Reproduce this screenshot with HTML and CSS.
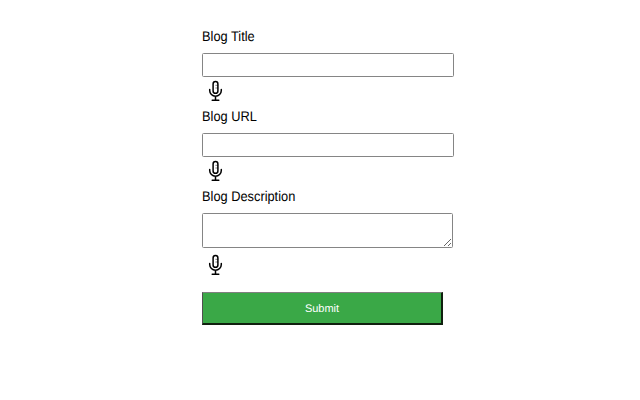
FILE: index.html
```html
<!DOCTYPE html>
<html lang="en">
<head>
<meta charset="utf-8">
<title>Blog</title>
<link rel="stylesheet" href="styles.css">
</head>
<body>
<svg class="defs" width="0" height="0" aria-hidden="true">
  <symbol id="mic" viewBox="0 0 16 22">
    <rect x="5.1" y="1.5" width="4.8" height="11.8" rx="2.4"/>
    <path d="M1.7 9.4v1a5.8 5.8 0 0 0 11.6 0v-1M7.5 16.3v3.7M4.2 20.2h6.6"/>
    <path class="detail" d="M7.8 5.3h2M7.8 8h2"/>
  </symbol>
</svg>
<form class="form">
  <div class="field">
    <label class="label" for="title">Blog Title</label>
    <input class="input" id="title" type="text">
    <svg class="mic"><use href="#mic"/></svg>
  </div>
  <div class="field">
    <label class="label" for="url">Blog URL</label>
    <input class="input" id="url" type="text">
    <svg class="mic"><use href="#mic"/></svg>
  </div>
  <div class="field">
    <label class="label" for="desc">Blog Description</label>
    <textarea class="area" id="desc"></textarea>
    <svg class="mic mic-area"><use href="#mic"/></svg>
  </div>
  <button class="submit" type="button">Submit</button>
</form>
</body>
</html>
```
FILE: styles.css
```css
body {
  margin: 0;
  background: #fff;
  color: #000;
  font: 14px/20px "Liberation Sans", Arial, sans-serif;
  text-rendering: geometricPrecision;
}
.defs { display: block; }
.form {
  width: 252px;
  margin: 26px 0 0 202px;
}
.field {
  display: flex;
  flex-direction: column;
  align-items: flex-start;
}
.label {
  height: 20px;
  margin: 0 0 7px -0.4px;
  transform: scaleX(.915);
  transform-origin: left;
}
.input, .area {
  box-sizing: border-box;
  width: 252px;
  height: 24px;
  margin: 0;
  border: 1px solid #858585;
  border-radius: 1.5px;
  background: #fff;
}
.area { width: 251px; height: 35px; }
.mic {
  width: 16px;
  height: 22px;
  margin: 3px 0 4px 6px;
  fill: none;
  stroke: #000;
  stroke-width: 1.5;
  stroke-linecap: round;
}
.detail { stroke-width: .5; }
.mic-area { margin-top: 6px; }
.submit {
  display: block;
  box-sizing: border-box;
  width: 241px;
  height: 33px;
  margin-top: 12px;
  padding: 1px 0 0;
  border: solid;
  border-width: 1px 2px 2px 1px;
  border-color: #808080 #10200f #10200f #505050;
  background: #3aa847;
  color: #fff;
  font: 11px "Liberation Sans", Arial, sans-serif;
  text-rendering: geometricPrecision;
}
```
